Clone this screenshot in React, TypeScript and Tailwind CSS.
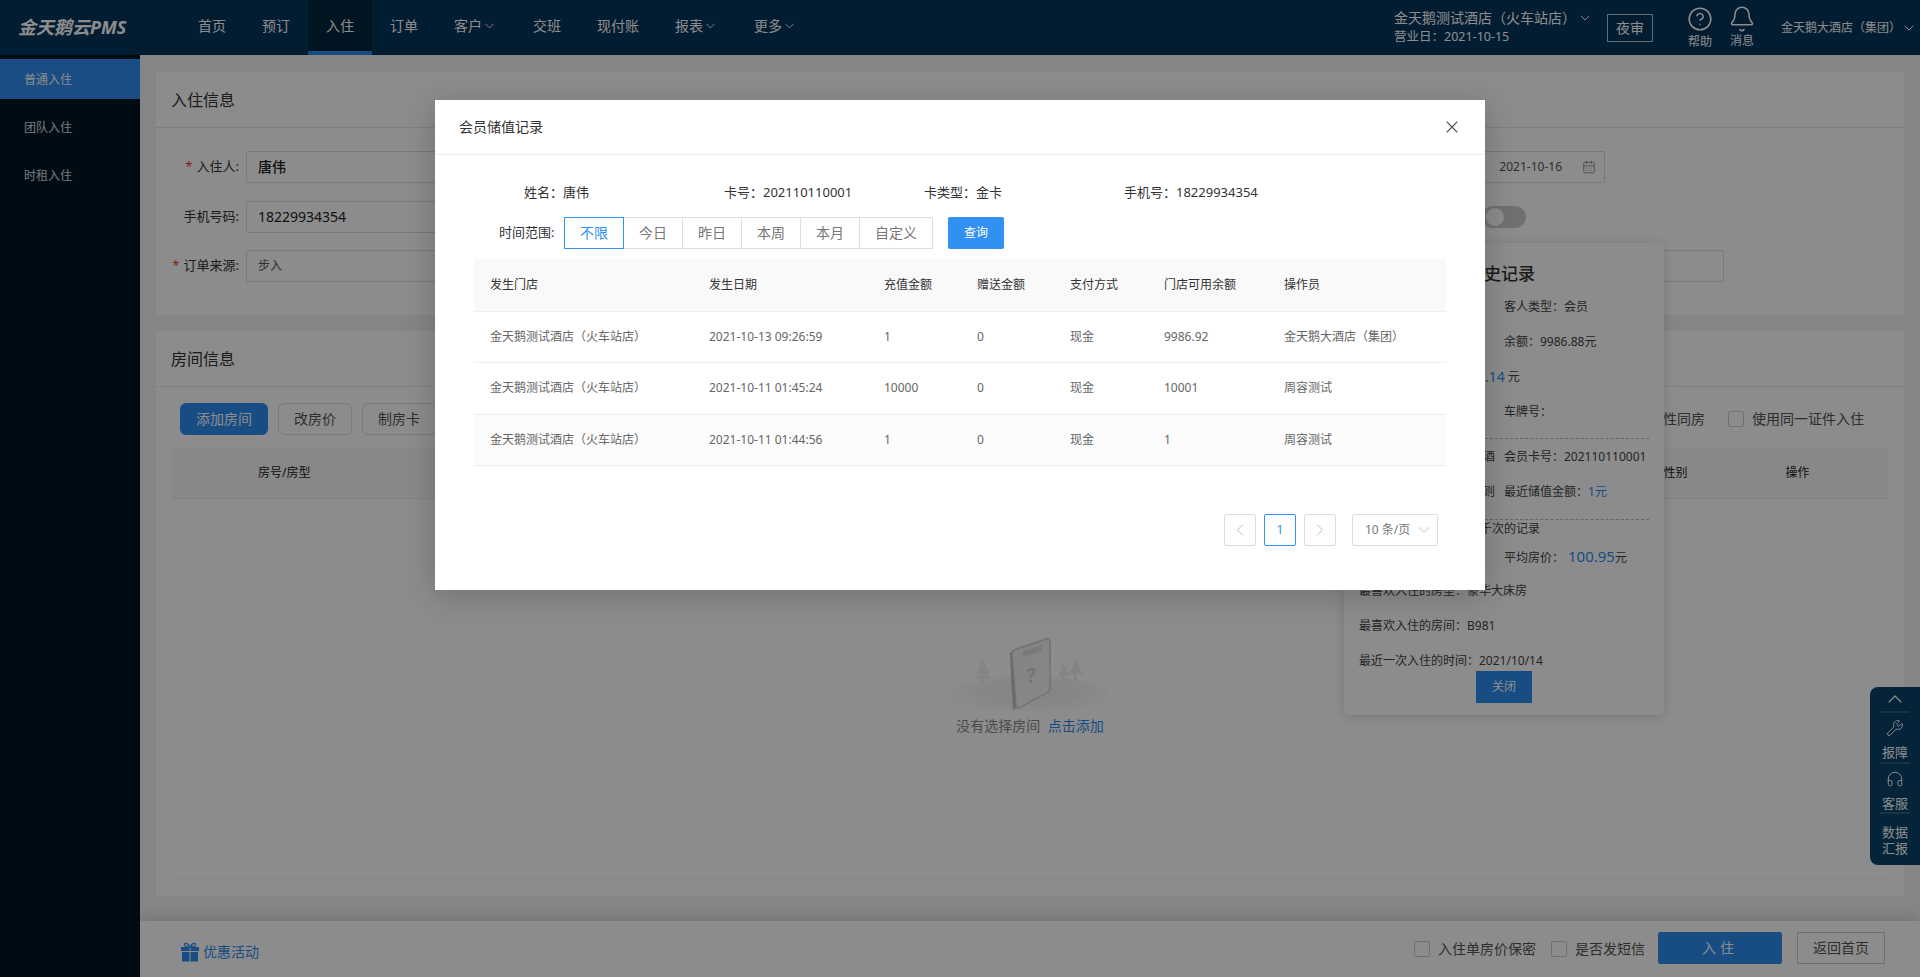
import { Bell, CalendarDays, ChevronDown, ChevronLeft, ChevronRight, ChevronUp, CircleHelp, Headphones, Wrench, X } from "lucide-react";

const navItems = [
  { label: "首页" },
  { label: "预订" },
  { label: "入住", active: true },
  { label: "订单" },
  { label: "客户", more: true },
  { label: "交班" },
  { label: "现付账" },
  { label: "报表", more: true },
  { label: "更多", more: true },
];

const sideItems = ["普通入住", "团队入住", "时租入住"];

const ranges = [
  { label: "不限", w: "w-[60px]" },
  { label: "今日", w: "w-[60px]" },
  { label: "昨日", w: "w-[60px]" },
  { label: "本周", w: "w-[60px]" },
  { label: "本月", w: "w-[60px]" },
  { label: "自定义", w: "w-[74px]" },
];

const records = [
  ["金天鹅测试酒店（火车站店）", "2021-10-13 09:26:59", "1", "0", "现金", "9986.92", "金天鹅大酒店（集团）"],
  ["金天鹅测试酒店（火车站店）", "2021-10-11 01:45:24", "10000", "0", "现金", "10001", "周容测试"],
  ["金天鹅测试酒店（火车站店）", "2021-10-11 01:44:56", "1", "0", "现金", "1", "周容测试"],
];

const heads = ["发生门店", "发生日期", "充值金额", "赠送金额", "支付方式", "门店可用余额", "操作员"];

const Check = ({ label }: { label: string }) => (
  <label className="flex items-center gap-2 text-sm text-[#555]">
    <span className="w-4 h-4 rounded-[2px] border border-[#ccc] bg-white"></span>
    {label}
  </label>
);

const Field = ({ label, star, children }: { label: string; star?: boolean; children: React.ReactNode }) => (
  <div className="flex items-center h-8">
    <div className="w-[90px] pr-[7px] text-right text-[13px] text-[#333]">
      {star && <span className="text-[#ed4014] mr-1">*</span>}
      {label}
    </div>
    <div className="w-[340px] h-8 flex items-center px-[11px] rounded-[2px] border border-[#ddd] bg-white">{children}</div>
  </div>
);

const EmptyPicture = () => (
  <svg width="160" height="82" viewBox="0 0 160 82" className="block">
    <defs>
      <radialGradient id="mound" cx="50%" cy="40%" r="55%">
        <stop offset="0%" stopColor="#f0f0f0" />
        <stop offset="60%" stopColor="#f6f6f6" />
        <stop offset="100%" stopColor="#ffffff" />
      </radialGradient>
      <linearGradient id="front" x1="0" y1="0" x2="1" y2="1">
        <stop offset="0%" stopColor="#efefef" />
        <stop offset="100%" stopColor="#f8f8f8" />
      </linearGradient>
    </defs>
    <ellipse cx="80" cy="66" rx="80" ry="20" fill="url(#mound)" />
    <path d="M33 30l-4 6h2l-5 7h3l-4 6h6v4h3v-4h7l-4-6h3l-5-7h2z" fill="#f0f0f0" />
    <path d="M113 34l-3 5h2l-4 7h4v4h2v-4h5l-4-7h2z" fill="#f0f0f0" />
    <path d="M126 30l-4 6h2l-5 8h5v6h3v-6h6l-5-8h2z" fill="#eeeeee" />
    <path d="M60 24q0-2 4-4l2 58-3 2z" fill="#bdbdbd" />
    <path d="M64 20l32-11q4-1 4 3v47q0 2-2 3L69 78q-3 1-3-2L62 25q0-4 2-5z" fill="url(#front)" stroke="#cccccc" strokeWidth="1.4" strokeLinejoin="round" />
    <path d="M73 21l19-6v6l-19 6z" fill="#dfdfdf" />
    <text x="81" y="53" fontSize="20" fontWeight="700" fill="#d6d6d6" textAnchor="middle" transform="skewY(-12) translate(0 17)">?</text>
  </svg>
);

// left column of the panel is mostly under the dialog, only its tail shows
const PanelRow = ({ left, right }: { left?: React.ReactNode; right?: React.ReactNode }) => (
  <div className="flex items-center h-[35px] text-xs text-[#444] whitespace-nowrap">
    <div className="w-[145px] pr-[9px] text-right">{left}</div>
    <div>{right}</div>
  </div>
);

export default function App() {
  return (
    <div className="relative h-screen flex flex-col overflow-hidden bg-[#f0f2f5] font-['Noto_Sans','Noto_Sans_CJK_SC',sans-serif]">
      {/* Top bar */}
      <header className="h-[55px] shrink-0 flex items-stretch bg-[#05345c] text-white whitespace-nowrap">
        <div className="w-[180px] shrink-0 pl-[18px] flex items-center italic font-bold text-[18px]">金天鹅云PMS</div>
        <nav className="flex shrink-0">
          {navItems.map((n) => (
            <div
              key={n.label}
              className={`flex items-center px-[18px] text-sm border-b-4 ${n.active ? "bg-[#03263f] border-[#2d8cf0]" : "border-transparent"}`}
            >
              {n.label}
              {n.more && <ChevronDown className="w-[15px] h-4" strokeWidth={1.4} />}
            </div>
          ))}
        </nav>
        <div className="ml-[579px] shrink-0 flex flex-col justify-center gap-[1px] pb-[2px]">
          <div className="flex items-center text-sm leading-[20px]">
            金天鹅测试酒店（火车站店）
            <ChevronDown className="w-4 h-4 ml-[1px]" strokeWidth={1.4} />
          </div>
          <div className="text-[12.5px] leading-[16px]">营业日：2021-10-15</div>
        </div>
        <div className="ml-[14px] mt-[14px] shrink-0 w-[46px] h-7 flex items-center justify-center border border-white/70 text-sm">夜审</div>
        <div className="ml-[33px] shrink-0 w-[28px] flex flex-col items-center pt-[6px] text-xs">
          <CircleHelp className="w-[26px] h-[26px]" strokeWidth={1.4} />
          <span className="mt-[2px]">帮助</span>
        </div>
        <div className="ml-[14px] shrink-0 w-[28px] flex flex-col items-center pt-[5px] text-xs">
          <Bell className="w-[28px] h-[28px]" strokeWidth={1.3} />
          <span>消息</span>
        </div>
        <div className="ml-[25px] shrink-0 flex items-center text-xs mt-[1px]">
          金天鹅大酒店（集团）
          <ChevronDown className="w-4 h-4" strokeWidth={1.4} />
        </div>
      </header>

      <div className="flex flex-1 min-h-0">
        {/* Side menu */}
        <aside className="w-[140px] shrink-0 bg-[#001526] pt-1 flex flex-col gap-2 text-xs text-white/85">
          {sideItems.map((s, i) => (
            <div key={s} className={`h-10 flex items-center pl-6 pt-[2px] ${i === 0 ? "bg-[#2f8cee] text-white" : ""}`}>
              {s}
            </div>
          ))}
        </aside>

        <div className="flex-1 min-w-0 flex flex-col">
          <main className="flex-1 min-h-0 flex flex-col gap-4 pt-[17px] px-4 pb-[25px]">
            {/* Check-in info */}
            <section className="h-[243px] shrink-0 bg-white">
              <div className="h-[56px] flex items-center px-[15px] border-b border-[#e8e8e8] text-base text-[#333]">入住信息</div>
              <div className="pt-[23px] flex flex-col gap-[17.5px]">
                <div className="flex items-center">
                  <Field label="入住人:" star>
                    <span className="text-sm font-medium text-[#222]">唐伟</span>
                  </Field>
                  <div className="ml-[799px] w-[220px] h-8 flex items-center justify-end pr-2 rounded-[2px] border border-[#ddd] text-xs text-[#555]">
                    2021-10-16
                    <CalendarDays className="w-[14px] h-[14px] ml-[20px] text-[#888]" strokeWidth={1.5} />
                  </div>
                </div>
                <div className="flex items-center">
                  <Field label="手机号码:">
                    <span className="text-sm text-[#222]">18229934354</span>
                  </Field>
                  <div className="ml-[896px] w-11 h-[22px] rounded-full bg-[#ccc] flex items-center px-[3px]">
                    <span className="ml-[1px] w-[18px] h-[18px] rounded-full bg-white"></span>
                  </div>
                </div>
                <div className="flex items-center">
                  <Field label="订单来源:" star>
                    <span className="text-xs text-[#555]">步入</span>
                  </Field>
                  <div className="ml-[838px] w-[300px] h-8 rounded-[2px] border border-[#ddd]"></div>
                </div>
              </div>
            </section>

            {/* Room info */}
            <section className="flex-1 min-h-0 bg-white flex flex-col pb-[17px]">
              <div className="h-[56px] shrink-0 flex items-center px-[15px] border-b border-[#e8e8e8] text-base text-[#333]">房间信息</div>
              <div className="flex items-center h-8 mt-[16px] pl-6 pr-[40px] text-sm">
                <button className="w-[88px] h-8 rounded-md bg-[#2d8cf0] text-white">添加房间</button>
                <button className="ml-[10px] w-[74px] h-8 rounded-md border border-[#ddd] text-[#555]">改房价</button>
                <button className="ml-[10px] w-[74px] h-8 rounded-md border border-[#ddd] text-[#555]">制房卡</button>
                <div className="ml-auto text-[#555]">异性同房</div>
                <div className="ml-[23px]">
                  <Check label="使用同一证件入住" />
                </div>
              </div>
              <div className="mx-4 mt-3 h-[52px] shrink-0 flex items-center bg-[#f8f8f8] border-b border-[#eee] text-xs text-[#222]">
                <span className="ml-[86px]">房号/房型</span>
                <span className="ml-[1353px]">性别</span>
                <span className="ml-[98px]">操作</span>
              </div>
              <div className="mx-4 flex-1 flex flex-col items-center pt-[131px] border-b border-[#f2f2f2]">
                <EmptyPicture />
                <div className="mt-[4px] text-sm text-[#888]">
                  没有选择房间 <span className="ml-[4px] text-[#2d8cf0]">点击添加</span>
                </div>
              </div>
            </section>
          </main>

          {/* Bottom bar */}
          <footer className="h-[56px] shrink-0 flex items-center bg-white shadow-[0_-4px_12px_rgba(0,0,0,0.12)] pl-10 pr-[35px]">
            <svg width="20" height="20" viewBox="0 0 20 20" className="text-[#2d8cf0] mt-[5px]" fill="currentColor">
              <path d="M1 5h8.500v4H1zM10.500 5H19v4h-8.500zM2 10h7.500v9.500H2zM10.500 10H18v9.500h-7.500z" />
              <path d="M10 5C8 1 4 0 4.500 3 5 5 8 5 10 5c2 0 5 0 5.500-2C16 0 12 1 10 5z" fill="none" stroke="currentColor" strokeWidth="1.200" />
            </svg>
            <span className="ml-[3px] mt-[6px] text-sm text-[#2d8cf0]">优惠活动</span>
            <div className="ml-auto flex items-center gap-[15px]">
              <Check label="入住单房价保密" />
              <Check label="是否发短信" />
            </div>
            <button className="ml-[13px] w-[124px] h-8 rounded-[2px] bg-[#2d8cf0] text-white text-sm tracking-[4px] -mt-[3px]">入住</button>
            <button className="ml-[15px] w-[88px] h-8 border border-[#ccc] text-sm text-[#555] -mt-[3px]">返回首页</button>
          </footer>
        </div>
      </div>

      {/* Guest history panel */}
      <div className="absolute left-[1344px] top-[243px] w-[320px] h-[472px] rounded-[4px] bg-white shadow-[0_2px_12px_rgba(0,0,0,0.15)] pt-[15px] px-[15px]">
        <div className="h-[31px] pl-[108px] flex items-center text-[17px] font-medium text-[#333] whitespace-nowrap">客史记录</div>
        <PanelRow right="客人类型：会员" />
        <PanelRow right="余额：9986.88元" />
        <div className="flex items-center h-[35px] pl-[126px] text-xs text-[#444] whitespace-nowrap">
          <span className="text-sm text-[#2d8cf0]">.14</span>
          <span className="ml-[3px]">元</span>
        </div>
        <PanelRow right="车牌号：" />
        <div className="mt-[9px] border-b border-dashed border-[#bbb]"></div>
        <PanelRow left="酒" right="会员卡号：202110110001" />
        <PanelRow left="则" right={<span>最近储值金额：<span className="text-[#2d8cf0]">1元</span></span>} />
        <div className="mt-[10px] border-b border-dashed border-[#bbb]"></div>
        <div className="h-[18px] pl-[121px] flex items-center text-xs text-[#444] whitespace-nowrap">千次的记录</div>
        <PanelRow right={<span>平均房价：<span className="ml-1 text-[15px] text-[#2d8cf0]">100.95</span>元</span>} />
        <div className="flex items-center h-[35px] text-xs text-[#444]">最喜欢入住的房型：豪华大床房</div>
        <div className="flex items-center h-[35px] text-xs text-[#444]">最喜欢入住的房间：B981</div>
        <div className="flex items-center h-[35px] text-xs text-[#444]">最近一次入住的时间：2021/10/14</div>
        <button className="block ml-[117px] -mt-[7px] w-14 h-8 bg-[#2d8cf0] text-xs text-white">关闭</button>
      </div>

      {/* Floating tools */}
      <div className="absolute right-0 top-[687px] w-[50px] h-[178px] rounded-l-lg bg-[#074368] text-white text-[13px] flex flex-col items-center">
        <div className="h-[26px] w-[30px] flex items-center justify-center border-b-2 border-white/15">
          <ChevronUp className="w-6 h-6" strokeWidth={1.2} />
        </div>
        <div className="h-[51px] w-[30px] flex flex-col items-center pt-[6px] border-b-2 border-white/15 leading-4">
          <Wrench className="w-[18px] h-[18px]" strokeWidth={1.3} />
          <span className="mt-[7px]">报障</span>
        </div>
        <div className="h-[50px] w-[30px] flex flex-col items-center pt-[6px] border-b-2 border-white/15 leading-4">
          <Headphones className="w-[18px] h-[18px]" strokeWidth={1.3} />
          <span className="mt-[7px]">客服</span>
        </div>
        <div className="pt-[10px] text-center leading-4">
          数据
          <br />
          汇报
        </div>
      </div>

      {/* Mask */}
      <div className="absolute inset-0 bg-black/45"></div>

      {/* Dialog */}
      <div className="absolute left-1/2 -translate-x-1/2 top-[100px] w-[1050px] h-[490px] bg-white shadow-[0_6px_30px_rgba(0,0,0,0.2)]">
        <div className="h-[55px] flex items-center justify-between pl-6 pr-[23px] border-b border-[#eee] text-sm text-[#333]">
          会员储值记录
          <X className="w-5 h-5 text-[#555]" strokeWidth={1.3} />
        </div>
        <div className="px-[39px]">
          <div className="flex items-center h-5 mt-[28px] text-[13px] text-[#333]">
            <div className="ml-[50px] w-[200px]">姓名：唐伟</div>
            <div className="w-[200px]">卡号：202110110001</div>
            <div className="w-[200px]">卡类型：金卡</div>
            <div>手机号：18229934354</div>
          </div>
          <div className="flex items-center mt-[14px]">
            <span className="ml-[25px] w-[65px] text-[13px] text-[#333]">时间范围:</span>
            <div className="flex">
              {ranges.map((r, i) => (
                <div
                  key={r.label}
                  className={`${r.w} h-8 flex items-center justify-center text-sm border ${i === 0 ? "border-[#3091f2] text-[#3091f2] z-10" : "-ml-px border-[#ddd] text-[#777]"}`}
                >
                  {r.label}
                </div>
              ))}
            </div>
            <button className="ml-[15px] w-14 h-8 rounded-[2px] bg-[#3091f2] text-xs text-white">查询</button>
          </div>
          <table className="mt-[10px] w-[972px] table-fixed border-collapse text-xs">
            <colgroup>
              <col className="w-[219px]" />
              <col className="w-[175px]" />
              <col className="w-[93px]" />
              <col className="w-[93px]" />
              <col className="w-[94px]" />
              <col className="w-[120px]" />
              <col />
            </colgroup>
            <thead>
              <tr className="h-[52px] bg-[#f9f9f9] border-b border-[#eee] text-[#333]">
                {heads.map((h) => (
                  <th key={h} className="pl-4 text-left font-normal">
                    {h}
                  </th>
                ))}
              </tr>
            </thead>
            <tbody className="text-[#666]">
              {records.map((r, i) => (
                <tr key={i} className={`border-b border-[#eee] ${i === 1 ? "h-[52px]" : "h-[51px]"} ${i === 2 ? "bg-[#fcfcfc]" : ""}`}>
                  {r.map((c, j) => (
                    <td key={j} className="pl-4 whitespace-nowrap">
                      {c}
                    </td>
                  ))}
                </tr>
              ))}
            </tbody>
          </table>
          <div className="flex items-center justify-end mt-[48px] pr-[8px]">
            <div className="w-8 h-8 flex items-center justify-center rounded-[2px] border border-[#ddd] text-[#bbb]">
              <ChevronLeft className="w-5 h-5" strokeWidth={1.2} />
            </div>
            <div className="ml-2 w-8 h-8 flex items-center justify-center rounded-[2px] border border-[#3091f2] text-xs text-[#3091f2]">1</div>
            <div className="ml-2 w-8 h-8 flex items-center justify-center rounded-[2px] border border-[#ddd] text-[#bbb]">
              <ChevronRight className="w-5 h-5" strokeWidth={1.2} />
            </div>
            <div className="ml-4 w-[86px] h-8 flex items-center justify-between pl-3 pr-[3px] rounded-[2px] border border-[#ddd] text-xs text-[#777]">
              10 条/页
              <ChevronDown className="w-5 h-5 text-[#bbb]" strokeWidth={1.1} />
            </div>
          </div>
        </div>
      </div>
    </div>
  );
}
